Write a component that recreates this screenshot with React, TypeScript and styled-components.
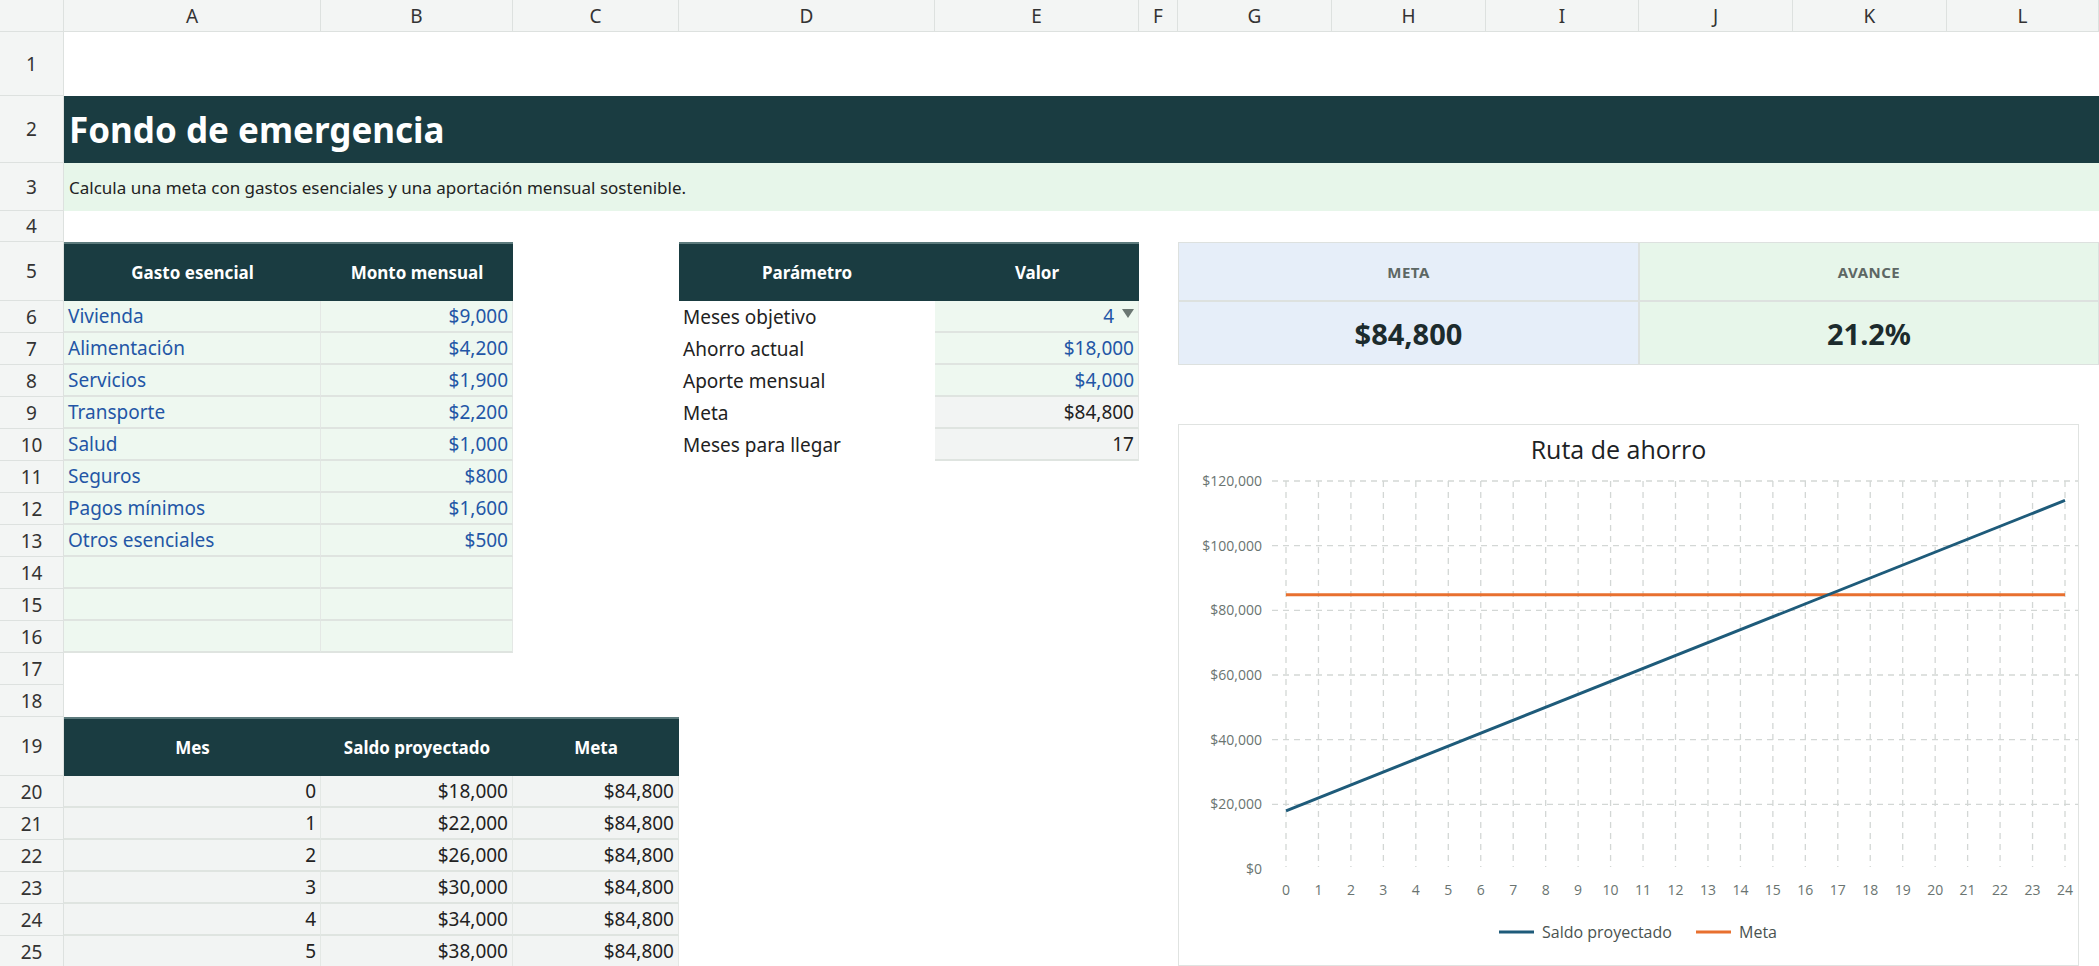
import React from 'react';
import styled, { createGlobalStyle, css } from 'styled-components';

const COLS = [257, 192, 166, 256, 204, 39, 154, 154, 153, 154, 154, 152];
const LETTERS = ['A', 'B', 'C', 'D', 'E', 'F', 'G', 'H', 'I', 'J', 'K', 'L'];
const ROWS = [64, 67, 48, 31, 59, 32, 32, 32, 32, 32, 32, 32, 32, 32, 32, 32, 32, 32, 59, 32, 32, 32, 32, 32, 32];

const DARK = '#1a3c41';
const INPUT_BG = '#eef8f0';
const CALC_BG = '#f2f4f3';
const BLUE = '#2356a6';

const Global = createGlobalStyle`
  html, body { margin: 0; padding: 0; background: #fff; overflow: hidden; }
  body { font-family: "Noto Sans", "Liberation Sans", sans-serif; color: #222; }
`;

const Sheet = styled.div`
  display: grid;
  grid-template-columns: 64px ${COLS.map((c) => `${c}px`).join(' ')};
  grid-template-rows: 32px ${ROWS.map((r) => `${r}px`).join(' ')};
  width: 2099px;
  height: 966px;
  overflow: hidden;
`;

type Place = { $c: number; $r: number; $cs?: number; $rs?: number };
const place = css<Place>`
  grid-column: ${(p) => p.$c + 1} / span ${(p) => p.$cs ?? 1};
  grid-row: ${(p) => p.$r + 1} / span ${(p) => p.$rs ?? 1};
`;

const Corner = styled.div`
  grid-column: 1;
  grid-row: 1;
  background: #f3f5f4;
  border-right: 1px solid #dde1df;
  border-bottom: 1px solid #dde1df;
`;

const ColHead = styled.div<Place>`
  ${place};
  background: #f3f5f4;
  border-right: 1px solid #dde1df;
  border-bottom: 1px solid #dde1df;
  display: flex;
  align-items: center;
  justify-content: center;
  font-size: 19px;
  color: #333;
`;

const RowHead = styled(ColHead)`
  font-size: 19px;
`;

const Band = styled.div<Place & { $bg: string }>`
  ${place};
  background: ${(p) => p.$bg};
  display: flex;
  align-items: center;
  padding-left: 5px;
`;

const Title = styled.h1`
  margin: 0;
  color: #fff;
  font-size: 35px;
  font-weight: 700;
`;

const Subtitle = styled.span`
  font-size: 17px;
  color: #222;
`;

const Head = styled.div<Place>`
  ${place};
  background: ${DARK};
  color: #fff;
  font-weight: 700;
  font-size: 17px;
  display: flex;
  align-items: center;
  justify-content: center;
  border-top: 2px solid #5c7a7c;
`;

const Cell = styled.div<Place & { $bg?: string; $color?: string; $right?: boolean }>`
  ${place};
  background: ${(p) => p.$bg ?? 'transparent'};
  color: ${(p) => p.$color ?? '#222'};
  font-size: 19px;
  display: flex;
  align-items: center;
  justify-content: ${(p) => (p.$right ? 'flex-end' : 'flex-start')};
  padding: 0 4px;
  border-bottom: ${(p) => (p.$bg ? '2px solid #dfe4e0' : 'none')};
  border-right: ${(p) => (p.$bg ? '1px solid #e4e8e5' : 'none')};
  gap: 8px;
`;

const Arrow = styled.span`
  width: 0;
  height: 0;
  border-left: 6px solid transparent;
  border-right: 6px solid transparent;
  border-top: 9px solid #6b7773;
  margin-top: -6px;
`;

const KpiLabel = styled.div<Place & { $bg: string }>`
  ${place};
  background: ${(p) => p.$bg};
  border: 1px solid #dde1df;
  display: flex;
  align-items: center;
  justify-content: center;
  font-size: 15px;
  font-weight: 700;
  color: #5d6764;
  letter-spacing: 0.5px;
`;

const KpiValue = styled(KpiLabel)`
  font-size: 29px;
  color: #1c2b2d;
  letter-spacing: 0;
`;

const ChartBox = styled.div`
  grid-column: 8 / span 6;
  grid-row: 11 / span 16;
  margin: -5px 20px 2px 0;
  border: 1px solid #e0e3e1;
  background: #fff;
`;

const expenses: [string, string][] = [
  ['Vivienda', '$9,000'],
  ['Alimentación', '$4,200'],
  ['Servicios', '$1,900'],
  ['Transporte', '$2,200'],
  ['Salud', '$1,000'],
  ['Seguros', '$800'],
  ['Pagos mínimos', '$1,600'],
  ['Otros esenciales', '$500'],
  ['', ''],
  ['', ''],
  ['', ''],
];

const params: [string, string, 'input' | 'calc'][] = [
  ['Meses objetivo', '4', 'input'],
  ['Ahorro actual', '$18,000', 'input'],
  ['Aporte mensual', '$4,000', 'input'],
  ['Meta', '$84,800', 'calc'],
  ['Meses para llegar', '17', 'calc'],
];

const fmt = (n: number) => '$' + n.toLocaleString('en-US');

const Chart = () => {
  const W = 899;
  const H = 533;
  const x0 = 107;
  const x1 = 886;
  const y0 = 444;
  const yTop = 56;
  const xs = (i: number) => x0 + ((x1 - x0) * i) / 24;
  const ys = (v: number) => y0 - ((y0 - yTop) * v) / 120000;
  const ticks = [0, 20000, 40000, 60000, 80000, 100000, 120000];
  return (
    <svg width={W} height={H} viewBox={`0 0 ${W} ${H}`}>
      <text x={W / 2 - 10} y={34} textAnchor="middle" fontSize="25" fill="#1c2224" fontFamily="Open Sans, sans-serif">
        Ruta de ahorro
      </text>
      {ticks.map((t) => (
        <g key={t}>
          {t > 0 && (
            <line x1={x0 - 14} x2={x1 + 14} y1={ys(t)} y2={ys(t)} stroke="#d3d7d5" strokeWidth="1.3" strokeDasharray="6 5" />
          )}
          <text x={x0 - 24} y={ys(t) + 5} textAnchor="end" fontSize="14" fill="#6a7471" fontFamily="Open Sans, sans-serif">
            {fmt(t)}
          </text>
        </g>
      ))}
      {Array.from({ length: 25 }, (_, i) => (
        <g key={i}>
          <line x1={xs(i)} x2={xs(i)} y1={yTop} y2={y0 - 2} stroke="#d3d7d5" strokeWidth="1.3" strokeDasharray="6 5" />
          <text x={xs(i)} y={y0 + 26} textAnchor="middle" fontSize="14" fill="#6a7471" fontFamily="Open Sans, sans-serif">
            {i}
          </text>
        </g>
      ))}
      <line x1={xs(0)} x2={xs(24)} y1={ys(84800)} y2={ys(84800)} stroke="#e8702f" strokeWidth="3" />
      <line x1={xs(0)} x2={xs(24)} y1={ys(18000)} y2={ys(114000)} stroke="#1e5b7a" strokeWidth="3" />
      <line x1={320} x2={355} y1={507} y2={507} stroke="#1e5b7a" strokeWidth="3" />
      <text x={363} y={513} fontSize="16" fill="#4a5350" fontFamily="Open Sans, sans-serif">Saldo proyectado</text>
      <line x1={517} x2={552} y1={507} y2={507} stroke="#e8702f" strokeWidth="3" />
      <text x={560} y={513} fontSize="16" fill="#4a5350" fontFamily="Open Sans, sans-serif">Meta</text>
    </svg>
  );
};

export default function App() {
  return (
    <>
      <Global />
      <Sheet>
        <Corner />
        {LETTERS.map((l, i) => (
          <ColHead key={l} $c={i + 1} $r={0}>{l}</ColHead>
        ))}
        {ROWS.map((_, i) => (
          <RowHead key={i} $c={0} $r={i + 1}>{i + 1}</RowHead>
        ))}

        <Band $c={1} $r={2} $cs={12} $bg={DARK}>
          <Title>Fondo de emergencia</Title>
        </Band>
        <Band $c={1} $r={3} $cs={12} $bg="#e7f6ea">
          <Subtitle>Calcula una meta con gastos esenciales y una aportación mensual sostenible.</Subtitle>
        </Band>

        <Head $c={1} $r={5}>Gasto esencial</Head>
        <Head $c={2} $r={5}>Monto mensual</Head>
        {expenses.map(([n, v], i) => (
          <React.Fragment key={i}>
            <Cell $c={1} $r={6 + i} $bg={INPUT_BG} $color={BLUE}>{n}</Cell>
            <Cell $c={2} $r={6 + i} $bg={INPUT_BG} $color={BLUE} $right>{v}</Cell>
          </React.Fragment>
        ))}

        <Head $c={4} $r={5}>Parámetro</Head>
        <Head $c={5} $r={5}>Valor</Head>
        {params.map(([n, v, kind], i) => (
          <React.Fragment key={n}>
            <Cell $c={4} $r={6 + i}>{n}</Cell>
            <Cell
              $c={5}
              $r={6 + i}
              $bg={kind === 'input' ? INPUT_BG : CALC_BG}
              $color={kind === 'input' ? BLUE : '#222'}
              $right
            >
              {v}
              {i === 0 && <Arrow />}
            </Cell>
          </React.Fragment>
        ))}

        <KpiLabel $c={7} $r={5} $cs={3} $bg="#e6eef9">META</KpiLabel>
        <KpiLabel $c={10} $r={5} $cs={3} $bg="#e7f6ea">AVANCE</KpiLabel>
        <KpiValue $c={7} $r={6} $cs={3} $rs={2} $bg="#e6eef9">$84,800</KpiValue>
        <KpiValue $c={10} $r={6} $cs={3} $rs={2} $bg="#e7f6ea">21.2%</KpiValue>

        <Head $c={1} $r={19}>Mes</Head>
        <Head $c={2} $r={19}>Saldo proyectado</Head>
        <Head $c={3} $r={19}>Meta</Head>
        {Array.from({ length: 6 }, (_, i) => (
          <React.Fragment key={i}>
            <Cell $c={1} $r={20 + i} $bg={CALC_BG} $right>{i}</Cell>
            <Cell $c={2} $r={20 + i} $bg={CALC_BG} $right>{fmt(18000 + 4000 * i)}</Cell>
            <Cell $c={3} $r={20 + i} $bg={CALC_BG} $right>$84,800</Cell>
          </React.Fragment>
        ))}

        <ChartBox>
          <Chart />
        </ChartBox>
      </Sheet>
    </>
  );
}
